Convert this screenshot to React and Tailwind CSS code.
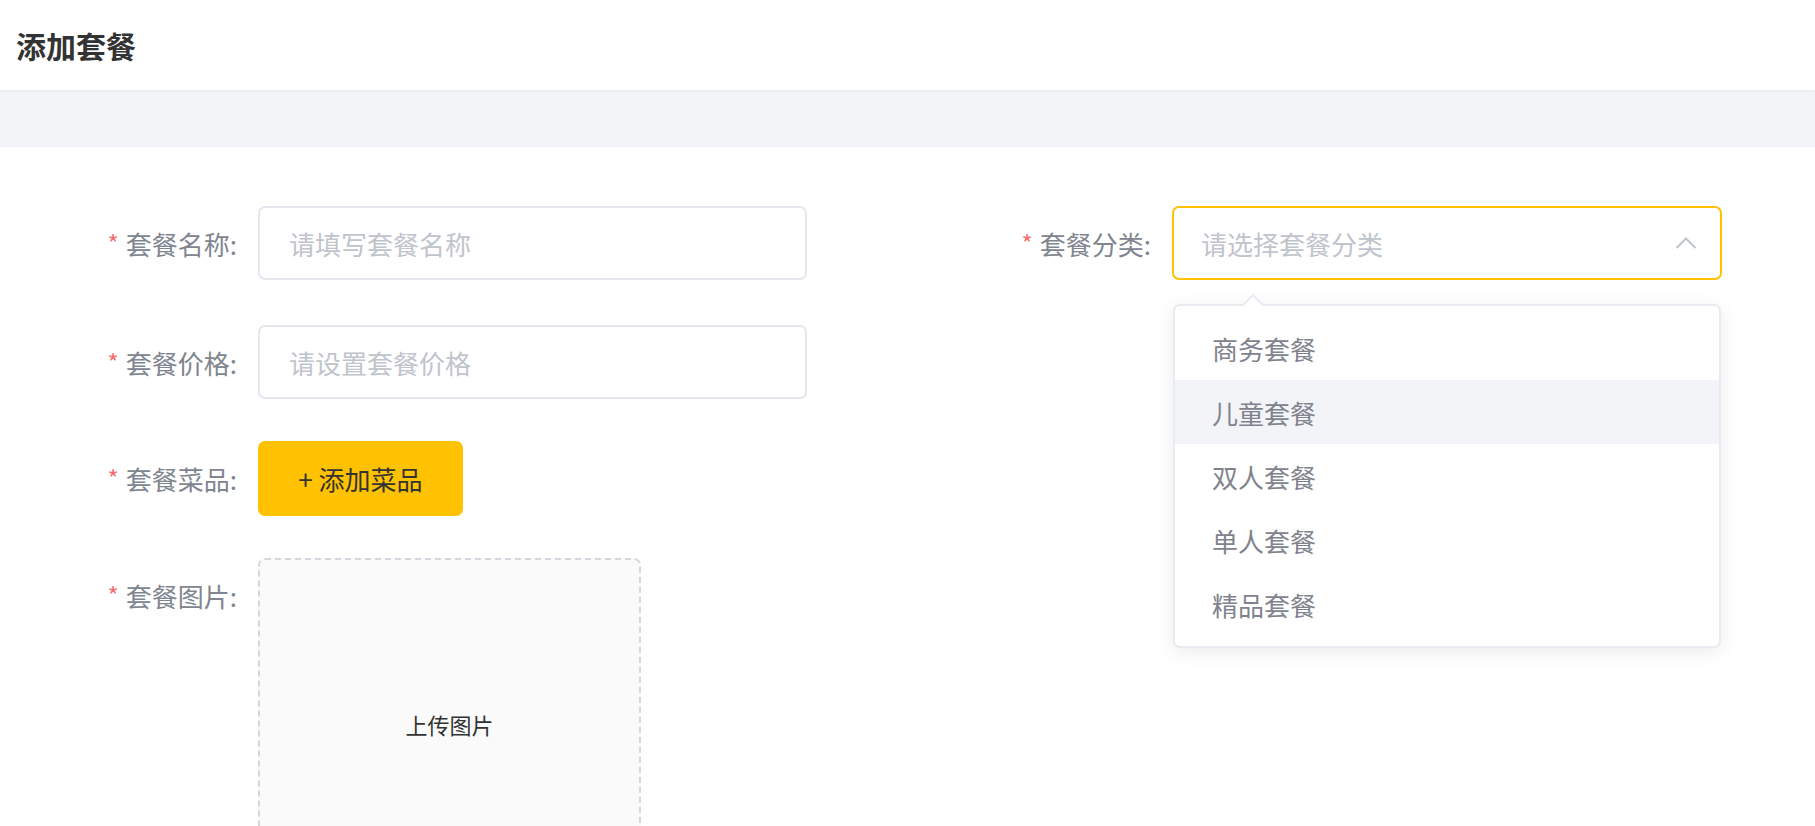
import { useState } from 'react'

const categories = ['商务套餐', '儿童套餐', '双人套餐', '单人套餐', '精品套餐']

const Label = ({ text, top }) => (
  <div className={`w-[185px] shrink-0 pr-[21px] flex justify-end ${top ? 'items-start' : 'items-center'} h-[74px] text-[26px] text-[#80858f]`}>
    <span className="text-[#f56c6c] mr-[7px] text-[24px]">*</span>
    <span>{text}:</span>
  </div>
)

const TextInput = ({ placeholder }) => (
  <input
    placeholder={placeholder}
    className="w-[549px] h-[74px] border-2 border-[#e4e7ed] rounded-[7px] px-[29px] text-[26px] text-[#606266] placeholder:text-[#c0c4cc] outline-none"
  />
)

const App = () => {
  const [active] = useState(1)

  return (
    <div className="min-h-screen bg-white font-['Noto_Sans_CJK_SC','Noto_Sans',sans-serif]">
      <header className="relative z-10 h-[90px] flex items-center pl-[16px] bg-white shadow-[0_1px_4px_rgba(0,0,0,0.06)]">
        <h1 className="text-[30px] font-bold text-[#333]">添加套餐</h1>
      </header>
      <div className="h-[57px] bg-[#f3f4f7]" />

      <div className="pt-[59px] pl-[73px] flex">
        {/* left column */}
        <div className="flex flex-col">
          <div className="flex mb-[45px]">
            <Label text="套餐名称" />
            <TextInput placeholder="请填写套餐名称" />
          </div>
          <div className="flex mb-[42px]">
            <Label text="套餐价格" />
            <TextInput placeholder="请设置套餐价格" />
          </div>
          <div className="flex mb-[42px]">
            <Label text="套餐菜品" />
            <button className="w-[205px] h-[75px] rounded-[7px] bg-[#ffc200] text-[26px] text-[#333]">
              + 添加菜品
            </button>
          </div>
          <div className="flex">
            <Label text="套餐图片" />
            <div className="w-[383px] h-[332px] border-2 border-dashed border-[#d3d7de] rounded-[7px] bg-[#fafafa] flex items-center justify-center text-[22px] text-[#333]">
              上传图片
            </div>
          </div>
        </div>

        {/* right column */}
        <div className="ml-[180px] flex items-start">
          <Label text="套餐分类" />
          <div className="relative w-[550px]">
            <div className="h-[74px] border-2 border-[#ffc200] rounded-[7px] flex items-center justify-between pl-[27px] pr-[23px]">
              <span className="text-[26px] text-[#c0c4cc]">请选择套餐分类</span>
              <svg width="22" height="12" viewBox="0 0 22 12" fill="none">
                <path d="M1.5 11 L11 1.5 L20.5 11" stroke="#c0c4cc" strokeWidth="2" />
              </svg>
            </div>

            <div className="absolute left-[1px] top-[98px] w-[548px] bg-white border-2 border-[#e9ebf0] rounded-[7px] shadow-[0_4px_20px_rgba(0,0,0,0.08)] py-[10px]">
              <div className="absolute -top-[9px] left-[70px] w-[16px] h-[16px] bg-white border-l-2 border-t-2 border-[#e9ebf0] rotate-45" />
              {categories.map((c, i) => (
                <div
                  key={c}
                  className={`h-[64px] flex items-center pl-[37px] text-[26px] text-[#7f838d] ${i === active ? 'bg-[#f3f4f7]' : ''}`}
                >
                  {c}
                </div>
              ))}
            </div>
          </div>
        </div>
      </div>
    </div>
  )
}

export default App
